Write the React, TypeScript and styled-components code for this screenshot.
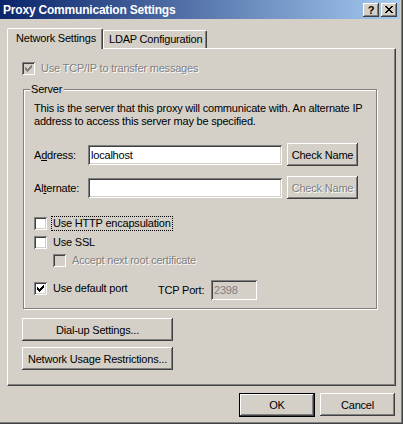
import React from 'react';
import styled, { createGlobalStyle } from 'styled-components';

const Global = createGlobalStyle`
  html, body { margin: 0; padding: 0; background: #D4D0C8; }
  body { font-family: "Liberation Sans", Arial, sans-serif; font-size: 11px; letter-spacing: -0.2px; color: #000; }
  * { box-sizing: border-box; }
`;

const Window = styled.div`
  width: 403px;
  height: 424px;
  background: #D4D0C8;
  border-right: 1px solid #404040;
  border-bottom: 1px solid #404040;
  box-shadow: inset -1px -1px #808080;
  display: flex;
  flex-direction: column;
  overflow: hidden;
`;

const TitleBar = styled.div`
  height: 19px;
  margin-right: 2px;
  background: linear-gradient(to right, #0A246A, #A6CAF0);
  display: flex;
  align-items: center;
  padding: 0 3px 0 3px;
`;

const Title = styled.div`
  flex: 1;
  color: #fff;
  font-weight: bold;
  font-size: 12px;
  letter-spacing: -0.2px;
`;

const CaptionButton = styled.div<{ $gap?: number }>`
  width: 16px;
  height: 14px;
  margin-left: ${p => p.$gap ?? 0}px;
  background: #D4D0C8;
  box-shadow: inset -1px -1px #404040, inset 1px 1px #fff, inset -2px -2px #808080;
  display: flex;
  align-items: center;
  justify-content: center;
  font-weight: bold;
  font-size: 11px;
  color: #000;
`;

const Body = styled.div`
  flex: 1;
  display: flex;
  flex-direction: column;
  padding: 9px 6px 0 7px;
`;

const TabStrip = styled.div`
  display: flex;
  align-items: flex-end;
  height: 20px;
  position: relative;
  z-index: 1;
`;

const Tab = styled.div<{ $active?: boolean; $w: number; $pl: number }>`
  width: ${p => p.$w}px;
  height: ${p => (p.$active ? 21 : 18)}px;
  margin-bottom: ${p => (p.$active ? -1 : 0)}px;
  padding: ${p => (p.$active ? 3 : 2)}px 0 0 ${p => p.$pl}px;
  background: #D4D0C8;
  border-left: 1px solid #fff;
  border-top: 1px solid #fff;
  border-right: 1px solid #404040;
  border-radius: 2px 2px 0 0;
  box-shadow: inset -1px 0 #808080;
  white-space: nowrap;
`;

const Panel = styled.div`
  width: 389px;
  height: 338px;
  border-left: 1px solid #fff;
  border-top: 1px solid #fff;
  border-right: 1px solid #404040;
  border-bottom: 1px solid #404040;
  box-shadow: inset -1px -1px #808080;
  display: flex;
  flex-direction: column;
  padding: 13px 0 0 14px;
`;

const CheckRow = styled.label<{ $indent?: number; $mt?: number; $w?: number }>`
  display: flex;
  align-items: center;
  height: 13px;
  width: ${p => (p.$w ? `${p.$w}px` : 'auto')};
  flex: none;
  margin-left: ${p => p.$indent ?? 0}px;
  margin-top: ${p => p.$mt ?? 0}px;
  gap: 6px;
`;

const Box = styled.span<{ $disabled?: boolean }>`
  width: 13px;
  height: 13px;
  flex: none;
  background: ${p => (p.$disabled ? '#D4D0C8' : '#fff')};
  box-shadow: inset 1px 1px #808080, inset -1px -1px #fff, inset 2px 2px #404040, inset -2px -2px #D4D0C8;
  display: block;
`;

const Label = styled.span<{ $disabled?: boolean; $focus?: boolean }>`
  color: ${p => (p.$disabled ? '#808080' : '#000')};
  text-shadow: ${p => (p.$disabled ? '1px 1px #fff' : 'none')};
  outline: ${p => (p.$focus ? '1px dotted #000' : 'none')};
  outline-offset: 0px;
  padding: 0 1px;
  margin-left: -1px;
  line-height: 13px;
  white-space: nowrap;
`;

const Group = styled.div`
  position: relative;
  margin: 14px 0 0 1px;
  width: 354px;
  height: 220px;
  border: 1px solid #808080;
  box-shadow: inset 1px 1px #fff, 1px 1px #fff;
  display: flex;
  flex-direction: column;
  padding: 12px 0 0 10px;
`;

const Legend = styled.span`
  position: absolute;
  top: -7px;
  left: 6px;
  padding: 0 2px 0 1px;
  background: #D4D0C8;
  line-height: 13px;
`;

const Desc = styled.p`
  margin: 0;
  line-height: 13px;
  width: 340px;
`;

const FieldRow = styled.div<{ $mt: number }>`
  display: flex;
  align-items: center;
  height: 23px;
  margin-top: ${p => p.$mt}px;
`;

const FieldLabel = styled.span`
  width: 54px;
  flex: none;
`;

const Field = styled.div<{ $w: number; $disabled?: boolean }>`
  width: ${p => p.$w}px;
  height: 20px;
  flex: none;
  background: ${p => (p.$disabled ? '#D4D0C8' : '#fff')};
  color: ${p => (p.$disabled ? '#808080' : '#000')};
  box-shadow: inset 1px 1px #808080, inset -1px -1px #fff, inset 2px 2px #404040, inset -2px -2px #D4D0C8;
  padding: 0 3px;
  display: flex;
  align-items: center;
`;

const Button = styled.div<{ $w: number; $h?: number; $disabled?: boolean; $default?: boolean; $ml?: number; $mt?: number }>`
  width: ${p => p.$w}px;
  height: ${p => p.$h ?? 23}px;
  margin-left: ${p => p.$ml ?? 0}px;
  margin-top: ${p => p.$mt ?? 0}px;
  flex: none;
  background: #D4D0C8;
  border: ${p => (p.$default ? '1px solid #000' : 'none')};
  box-shadow: inset -1px -1px #404040, inset 1px 1px #fff, inset -2px -2px #808080;
  display: flex;
  align-items: center;
  justify-content: center;
  color: ${p => (p.$disabled ? '#808080' : '#000')};
  text-shadow: ${p => (p.$disabled ? '1px 1px #fff' : 'none')};
  white-space: nowrap;
`;

const PortRow = styled.div`
  display: flex;
  align-items: flex-start;
  margin-top: 13px;
  height: 20px;
`;

const PortLabel = styled.span`
  width: 53px;
  line-height: 20px;
  flex: none;
`;

const Footer = styled.div`
  display: flex;
  justify-content: flex-end;
  padding: 7px 1px 0 0;
`;

const Check = ({ color }: { color: string }) => (
  <svg width="13" height="13" viewBox="0 0 13 13" shapeRendering="crispEdges" style={{ display: 'block' }}>
    <polygon points="3,5 5,7 10,2 10,5 5,10 3,8" fill={color} />
  </svg>
);

const CheckBox = ({ checked, disabled }: { checked?: boolean; disabled?: boolean }) => (
  <Box $disabled={disabled}>{checked && <Check color={disabled ? '#808080' : '#000'} />}</Box>
);

export default function App() {
  return (
    <>
      <Global />
      <Window>
        <TitleBar>
          <Title>Proxy Communication Settings</Title>
          <CaptionButton>?</CaptionButton>
          <CaptionButton $gap={2}>
            <svg width="8" height="7" viewBox="0 0 8 7" shapeRendering="crispEdges">
              <path d="M0 0h2l2 2.5L6 0h2L5 3.5 8 7H6L4 4.5 2 7H0l3-3.5z" fill="#000" />
            </svg>
          </CaptionButton>
        </TitleBar>
        <Body>
          <TabStrip>
            <Tab $active $w={96} $pl={8}>Network Settings</Tab>
            <Tab $w={104} $pl={5}>LDAP Configuration</Tab>
          </TabStrip>
          <Panel>
            <CheckRow>
              <CheckBox checked disabled />
              <Label $disabled>Use TCP/IP to transfer messages</Label>
            </CheckRow>
            <Group>
              <Legend>Server</Legend>
              <Desc>This is the server that this proxy will communicate with. An alternate IP address to access this server may be specified.</Desc>
              <FieldRow $mt={15}>
                <FieldLabel>A<u>d</u>dress:</FieldLabel>
                <Field $w={194}>localhost</Field>
                <Button $w={71} $ml={5}>Check Name</Button>
              </FieldRow>
              <FieldRow $mt={10}>
                <FieldLabel>Al<u>t</u>ernate:</FieldLabel>
                <Field $w={194} />
                <Button $w={71} $ml={5} $disabled>Check Name</Button>
              </FieldRow>
              <CheckRow $mt={18}>
                <CheckBox />
                <Label $focus>Use HTTP encapsulation</Label>
              </CheckRow>
              <CheckRow $mt={6}>
                <CheckBox />
                <Label>Use SSL</Label>
              </CheckRow>
              <CheckRow $mt={5} $indent={19}>
                <CheckBox disabled />
                <Label $disabled>Accept next root certificate</Label>
              </CheckRow>
              <PortRow>
                <CheckRow $w={124} $mt={2}>
                  <CheckBox checked />
                  <Label>Use default port</Label>
                </CheckRow>
                <PortLabel>TCP Port:</PortLabel>
                <Field $w={46} $disabled>2398</Field>
              </PortRow>
            </Group>
            <Button $w={151} $mt={9}>Dial-up Settings...</Button>
            <Button $w={151} $mt={6}>Network Usage Restrictions...</Button>
          </Panel>
          <Footer>
            <Button $w={76} $h={24} $default>OK</Button>
            <Button $w={75} $ml={5}>Cancel</Button>
          </Footer>
        </Body>
      </Window>
    </>
  );
}
